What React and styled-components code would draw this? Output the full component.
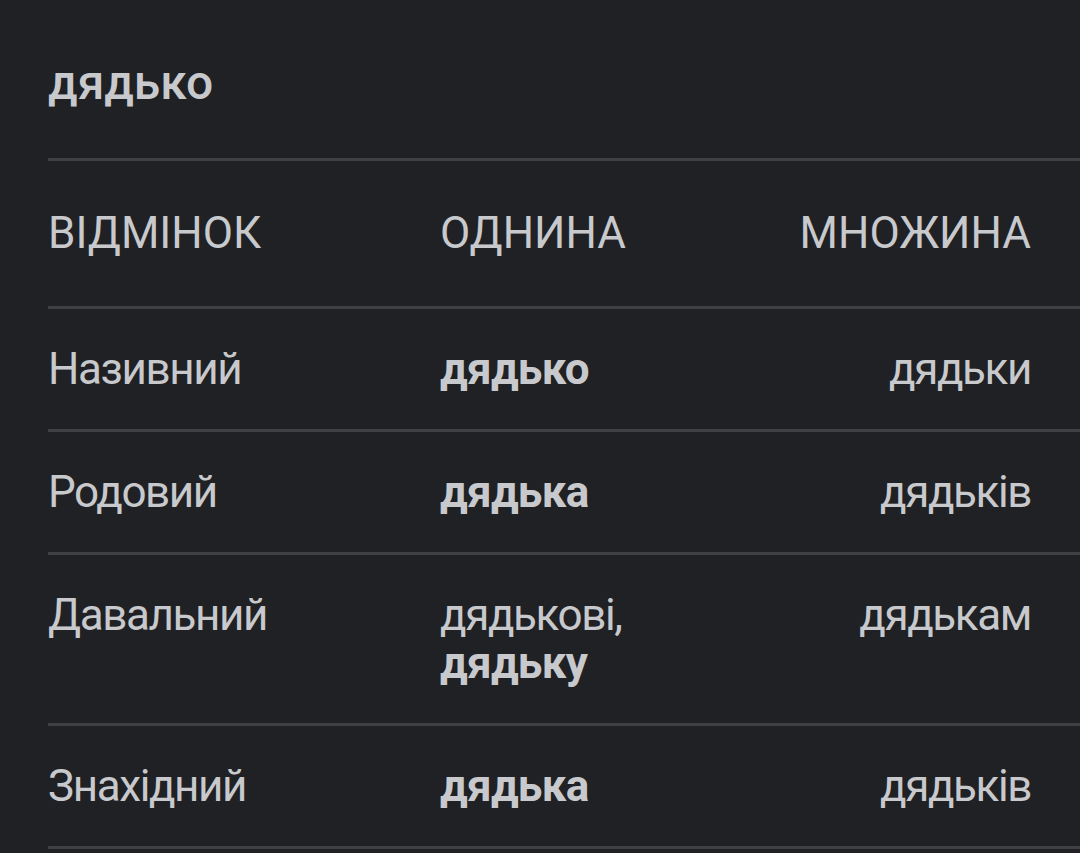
import React from "react";
import styled, { createGlobalStyle } from "styled-components";

const Global = createGlobalStyle`
  html, body {
    margin: 0;
    padding: 0;
    background: #202124;
  }
  body {
    font-family: Roboto, "Noto Sans", "Liberation Sans", sans-serif;
    color: #c8c9cc;
    overflow: hidden;
  }
`;

const Page = styled.div`
  min-height: 853px;
  background: #202124;
  padding-left: 48px;
`;

const Title = styled.h1`
  margin: 0;
  padding: 55px 0 47px;
  font-size: 48px;
  line-height: 56px;
  font-weight: 500;
  color: #c8c9cc;
  border-bottom: 3px solid #3f4044;
`;

const Table = styled.div`
  display: grid;
  grid-template-columns: 392px 1fr auto;
`;

const Cell = styled.div`
  padding: ${(p) => (p.$head ? "48px 0 49px" : "36px 0")};
  font-size: 44px;
  line-height: 48px;
  font-weight: 400;
  letter-spacing: ${(p) => (p.$head ? "0" : "-1.4px")};
  text-transform: ${(p) => (p.$head ? "uppercase" : "none")};
  text-align: ${(p) => (p.$align === "right" ? "right" : "left")};
  padding-right: ${(p) => (p.$align === "right" ? "49px" : "0")};
  border-bottom: 3px solid #3f4044;
  color: #c8c9cc;
`;

const Strong = styled.span`
  font-weight: 700;
  letter-spacing: -0.7px;
`;

const rows = [
  { c: "Називний", s: [<Strong key="a">дядько</Strong>], p: "дядьки" },
  { c: "Родовий", s: [<Strong key="a">дядька</Strong>], p: "дядьків" },
  {
    c: "Давальний",
    s: ["дядькові,", <br key="b" />, <Strong key="a">дядьку</Strong>],
    p: "дядькам",
  },
  { c: "Знахідний", s: [<Strong key="a">дядька</Strong>], p: "дядьків" },
];

export default function App() {
  return (
    <>
      <Global />
      <Page>
        <Title>дядько</Title>
        <Table>
          <Cell $head>Відмінок</Cell>
          <Cell $head>Однина</Cell>
          <Cell $head $align="right">Множина</Cell>
          {rows.map((r) => (
            <React.Fragment key={r.c}>
              <Cell>{r.c}</Cell>
              <Cell>{r.s}</Cell>
              <Cell $align="right">{r.p}</Cell>
            </React.Fragment>
          ))}
        </Table>
      </Page>
    </>
  );
}
